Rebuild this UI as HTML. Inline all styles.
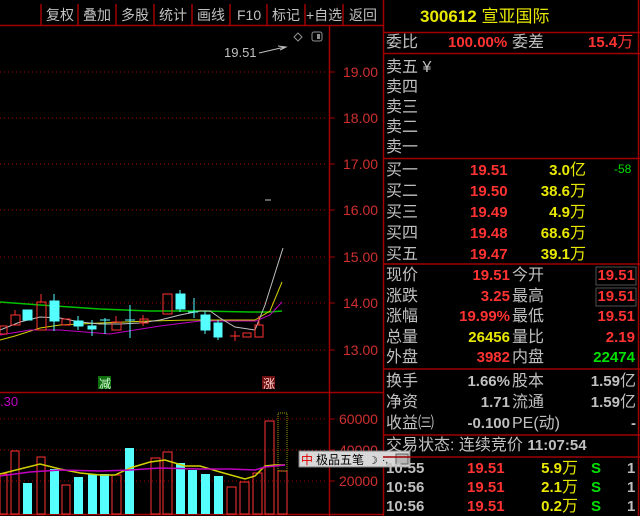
<!DOCTYPE html>
<html><head><meta charset="utf-8"><style>
html,body{margin:0;padding:0;background:#000;width:640px;height:516px;overflow:hidden}
body{position:relative;font-family:"Liberation Sans","Noto Sans CJK SC",sans-serif}
.t{position:absolute;white-space:nowrap}
.g{color:#c0c0c0}.r{color:#ff3232}.y{color:#e8e800}.gr{color:#00e000}
.cn{font-size:16px;line-height:20px}
.n{font-size:15px;font-weight:bold;line-height:20px}
.rt{text-align:right}
</style></head><body>
<svg width="640" height="516" style="position:absolute;left:0;top:0" font-family="Liberation Sans,Noto Sans CJK SC,sans-serif">
<!-- toolbar -->
<g stroke="#a00000" stroke-width="1.5">
<line x1="0" y1="25.5" x2="383" y2="25.5"/>
<line x1="41" y1="4" x2="41" y2="25"/><line x1="78" y1="4" x2="78" y2="25"/><line x1="116" y1="4" x2="116" y2="25"/><line x1="154" y1="4" x2="154" y2="25"/><line x1="192" y1="4" x2="192" y2="25"/><line x1="230" y1="4" x2="230" y2="25"/><line x1="267" y1="4" x2="267" y2="25"/><line x1="305" y1="4" x2="305" y2="25"/><line x1="343" y1="4" x2="343" y2="25"/>
</g>
<g fill="#c0c0c0" font-size="14">
<text x="46" y="20">复权</text><text x="83" y="20">叠加</text><text x="121" y="20">多股</text><text x="159" y="20">统计</text><text x="197" y="20">画线</text><text x="237" y="20">F10</text><text x="272" y="20">标记</text><text x="306" y="20">+自选</text><text x="349" y="20">返回</text>
</g>
<!-- axes -->
<line x1="329.5" y1="25" x2="329.5" y2="516" stroke="#a00000" stroke-width="1.5"/>
<line x1="383.5" y1="0" x2="383.5" y2="516" stroke="#a00000" stroke-width="1.5"/>
<line x1="0" y1="392.5" x2="383" y2="392.5" stroke="#a00000" stroke-width="1.5"/>
<line x1="0" y1="514.5" x2="383" y2="514.5" stroke="#a00000" stroke-width="1.5"/>
<g stroke="#a00000" stroke-dasharray="1,3">
<line x1="0" y1="72" x2="325" y2="72"/><line x1="0" y1="118" x2="325" y2="118"/><line x1="0" y1="164" x2="325" y2="164"/><line x1="0" y1="210" x2="325" y2="210"/><line x1="0" y1="257" x2="325" y2="257"/><line x1="0" y1="303" x2="325" y2="303"/><line x1="0" y1="350" x2="325" y2="350"/>
<line x1="0" y1="419" x2="325" y2="419"/><line x1="0" y1="450" x2="325" y2="450"/><line x1="0" y1="481" x2="325" y2="481"/>
</g>
<g stroke="#a00000"><line x1="329" y1="72" x2="335" y2="72"/><line x1="329" y1="118" x2="335" y2="118"/><line x1="329" y1="164" x2="335" y2="164"/><line x1="329" y1="210" x2="335" y2="210"/><line x1="329" y1="257" x2="335" y2="257"/><line x1="329" y1="303" x2="335" y2="303"/><line x1="329" y1="350" x2="335" y2="350"/><line x1="329" y1="419" x2="335" y2="419"/><line x1="329" y1="450" x2="335" y2="450"/><line x1="329" y1="481" x2="335" y2="481"/></g>
<g fill="#d03030" font-size="14">
<text x="343" y="77">19.00</text><text x="343" y="123">18.00</text><text x="343" y="169">17.00</text><text x="343" y="215">16.00</text><text x="343" y="262">15.00</text><text x="343" y="308">14.00</text><text x="343" y="355">13.00</text>
<text x="339" y="424">60000</text><text x="339" y="455">40000</text><text x="339" y="486">20000</text>
</g>
<text x="0" y="406" fill="#c000c0" font-size="13">.30</text>
<!-- top markers -->
<text x="224" y="57" fill="#c0c0c0" font-size="13">19.51</text>
<path d="M259 53 L285 47 M278 46 L286 47 L280 50" stroke="#c0c0c0" fill="none"/>
<path d="M298 33 L302 37 L298 41 L294 37 Z" stroke="#909090" fill="none"/>
<rect x="312" y="32" width="10" height="9" rx="2" stroke="#909090" fill="none"/><rect x="317" y="34" width="3" height="5" fill="#909090"/>
<line x1="265" y1="200" x2="271" y2="200" stroke="#c0c0c0"/>
<!-- MAs -->
<polyline points="0,302 40,305 100,309 150,311 200,311 250,312 270,312 282,311" stroke="#00c000" fill="none" stroke-width="1.5"/>
<polyline points="0,340 15,336 40,328 60,325 100,323 150,321 190,320 230,320 255,320 270,311 282,282" stroke="#d0d000" fill="none"/>
<polyline points="0,335 30,330 60,330 110,334 160,326 200,321 230,321 256,321 270,315 282,302" stroke="#c000c0" fill="none"/>
<polyline points="0,330 20,322 40,317 60,318 80,322 100,324 120,324 140,323 160,320 180,315 200,311 210,311 220,318 235,327 255,330 265,305 276,270 283,248" stroke="#c0c0c0" fill="none"/>
<!-- candles -->
<g stroke="#ff3232" fill="none">
<rect x="0" y="326" width="7" height="8"/><rect x="11" y="315" width="9" height="10"/><line x1="15" y1="310" x2="15" y2="315"/>
<rect x="37" y="302" width="9" height="28"/><line x1="41" y1="294" x2="41" y2="302"/>
<rect x="62" y="319" width="8" height="6"/>
<rect x="112" y="322" width="9" height="8"/><line x1="116" y1="316" x2="116" y2="322"/>
<rect x="140" y="319" width="8" height="4"/><line x1="143" y1="315" x2="143" y2="326"/>
<rect x="163" y="294" width="9" height="20"/>
<rect x="243" y="333" width="8" height="4"/><line x1="230" y1="336" x2="240" y2="336"/><line x1="235" y1="331" x2="235" y2="341"/>
<rect x="255" y="325" width="8" height="12"/><line x1="259" y1="316" x2="259" y2="325"/>
</g>
<g fill="#55ffff" stroke="#55ffff">
<rect x="23" y="310" width="9" height="10"/>
<rect x="50" y="301" width="9" height="20"/><line x1="54" y1="294" x2="54" y2="331"/>
<rect x="74" y="321" width="9" height="5"/><line x1="78" y1="316" x2="78" y2="330"/>
<rect x="88" y="326" width="8" height="3"/><line x1="92" y1="320" x2="92" y2="336"/>
<line x1="100" y1="320" x2="110" y2="320"/><line x1="105" y1="318" x2="105" y2="334"/>
<line x1="125" y1="320" x2="135" y2="320"/><line x1="130" y1="305" x2="130" y2="338"/>
<rect x="176" y="294" width="9" height="15"/><line x1="180" y1="290" x2="180" y2="312"/>
<line x1="188" y1="312" x2="198" y2="312"/><line x1="194" y1="298" x2="194" y2="318"/>
<rect x="201" y="315" width="9" height="15"/><line x1="205" y1="311" x2="205" y2="334"/>
<rect x="214" y="323" width="8" height="14"/><line x1="218" y1="320" x2="218" y2="340"/>
</g>
<rect x="98" y="376" width="13" height="13" fill="#107010"/><text x="99" y="388" fill="#d0ffd0" font-size="12">减</text>
<rect x="262" y="376" width="13" height="13" fill="#701010"/><text x="263" y="388" fill="#ffd0d0" font-size="12">涨</text>
<!-- volume -->
<g stroke="#ff3232" fill="none">
<rect x="0" y="474" width="7" height="40"/><rect x="11" y="451" width="8" height="63"/><rect x="37" y="457" width="8" height="57"/><rect x="62" y="485" width="8" height="29"/><rect x="112" y="475" width="9" height="39"/><rect x="151" y="458" width="9" height="56"/><rect x="163" y="452" width="9" height="62"/><rect x="227" y="487" width="9" height="27"/><rect x="240" y="482" width="9" height="32"/><rect x="253" y="473" width="9" height="41"/><rect x="265" y="421" width="9" height="93"/><rect x="278" y="471" width="9" height="43"/>
</g>
<rect x="278" y="413" width="9" height="58" stroke="#a0a000" stroke-dasharray="1,1" fill="none"/>
<g fill="#55ffff"><rect x="23" y="483" width="9" height="31"/><rect x="50" y="469" width="9" height="45"/><rect x="74" y="477" width="9" height="37"/><rect x="88" y="474" width="9" height="40"/><rect x="100" y="474" width="9" height="40"/><rect x="125" y="448" width="9" height="66"/><rect x="176" y="463" width="9" height="51"/><rect x="188" y="470" width="9" height="44"/><rect x="201" y="474" width="9" height="40"/><rect x="214" y="476" width="9" height="38"/></g>
<polyline points="0,474 20,469 40,464 60,469 80,473 100,475 115,475 130,468 150,462 165,460 185,466 200,466 220,472 245,479 255,476 265,466 275,465 285,465" stroke="#d0d000" fill="none" stroke-width="1.5"/>
<polyline points="0,476 30,472 60,470 100,471 130,470 160,468 200,469 230,469 255,470 265,467 285,465" stroke="#c000c0" fill="none" stroke-width="1.5"/>
<!-- IME bar -->
<rect x="299" y="451" width="111" height="16" fill="#d8d8d8" stroke="#808080"/>
<text x="301" y="464" fill="#e00000" font-size="12">中</text>
<text x="316" y="464" fill="#000" font-size="12">极品五笔</text>
<text x="368" y="464" fill="#000" font-size="11">☽</text><text x="382" y="463" fill="#000" font-size="10">·,</text>
<rect x="396" y="454" width="12" height="10" fill="#b8b8b8" stroke="#606060"/>
<!-- right panel lines -->
<g stroke="#a00000" stroke-width="1.5">
<line x1="383" y1="32.5" x2="640" y2="32.5"/><line x1="383" y1="53.5" x2="640" y2="53.5"/><line x1="383" y1="158.5" x2="640" y2="158.5"/><line x1="383" y1="264" x2="640" y2="264"/><line x1="383" y1="369" x2="640" y2="369"/><line x1="383" y1="435" x2="640" y2="435"/><line x1="383" y1="457" x2="640" y2="457"/>
<line x1="638.5" y1="0" x2="638.5" y2="516"/>
</g>
<rect x="596" y="267" width="40" height="18" stroke="#505050" fill="none"/><rect x="596" y="288" width="40" height="18" stroke="#505050" fill="none"/>
</svg>
<div class="t y" style="left:420px;top:7px;font-size:17px;font-weight:bold;line-height:20px">300612 <span style="font-weight:normal">宣亚国际</span></div>
<div class="t g cn" style="left:386px;top:33px">委比</div><div class="t r n" style="left:448px;top:33px">100.00%</div><div class="t g cn" style="left:512px;top:33px">委差</div><div class="t r n" style="left:588px;top:33px">15.4<span style="font-weight:normal;font-size:16px">万</span></div>
<div class="t g cn" style="left:386px;top:58px">卖五 ¥</div><div class="t g cn" style="left:386px;top:78px">卖四</div><div class="t g cn" style="left:386px;top:98px">卖三</div><div class="t g cn" style="left:386px;top:118px">卖二</div><div class="t g cn" style="left:386px;top:138px">卖一</div>
<div class="t g cn" style="left:386px;top:160px;line-height:21px">买一<br>买二<br>买三<br>买四<br>买五</div>
<div class="t r n" style="left:470px;top:160px;line-height:21px">19.51<br>19.50<br>19.49<br>19.48<br>19.47</div>
<div class="t y n rt" style="left:520px;width:66px;top:160px;line-height:21px">3.0<span style="font-weight:normal;font-size:16px">亿</span><br>38.6<span style="font-weight:normal;font-size:16px">万</span><br>4.9<span style="font-weight:normal;font-size:16px">万</span><br>68.6<span style="font-weight:normal;font-size:16px">万</span><br>39.1<span style="font-weight:normal;font-size:16px">万</span></div>
<div class="t gr" style="left:614px;top:162px;font-size:12px">-58</div>
<div class="t g cn" style="left:386px;top:266px;line-height:20.6px">现价<br>涨跌<br>涨幅<br>总量<br>外盘</div>
<div class="t n rt" style="left:440px;width:70px;top:266px;line-height:20.6px"><span class="r">19.51</span><br><span class="r">3.25</span><br><span class="r">19.99%</span><br><span class="y">26456</span><br><span class="r">3982</span></div>
<div class="t g cn" style="left:512px;top:266px;line-height:20.6px">今开<br>最高<br>最低<br>量比<br>内盘</div>
<div class="t n rt" style="left:560px;width:75px;top:266px;line-height:20.6px"><span class="r">19.51</span><br><span class="r">19.51</span><br><span class="r">19.51</span><br><span class="r">2.19</span><br><span class="gr">22474</span></div>
<div class="t g cn" style="left:386px;top:371px;line-height:21px">换手<br>净资<br>收益㈢</div>
<div class="t g n rt" style="left:440px;width:70px;top:371px;line-height:21px">1.66%<br>1.71<br>-0.100</div>
<div class="t g cn" style="left:512px;top:371px;line-height:21px">股本<br>流通<br>PE(动)</div>
<div class="t g n rt" style="left:560px;width:76px;top:371px;line-height:21px">1.59<span style="font-weight:normal;font-size:16px">亿</span><br>1.59<span style="font-weight:normal;font-size:16px">亿</span><br>-</div>
<div class="t g cn" style="left:386px;top:436px">交易状态: 连续竞价 <span class="n">11:07:54</span></div>
<div class="t g n" style="left:386px;top:459px;line-height:19px">10:55<br>10:56<br>10:56</div>
<div class="t r n" style="left:467px;top:459px;line-height:19px">19.51<br>19.51<br>19.51</div>
<div class="t y n rt" style="left:520px;width:58px;top:459px;line-height:19px">5.9<span style="font-weight:normal;font-size:16px">万</span><br>2.1<span style="font-weight:normal;font-size:16px">万</span><br>0.2<span style="font-weight:normal;font-size:16px">万</span></div>
<div class="t gr n" style="left:591px;top:459px;line-height:19px">S<br>S<br>S</div>
<div class="t g n" style="left:627px;top:459px;line-height:19px">1<br>1<br>1</div>
</body></html>
